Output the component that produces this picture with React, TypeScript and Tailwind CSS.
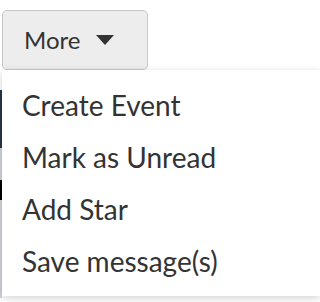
import React from "react";

export default function App() {
  const items = ["Create Event", "Mark as Unread", "Add Star", "Save message(s)"];
  return (
    <div className="relative w-[320px] h-[302px] bg-white overflow-hidden" style={{ fontFamily: "Lato, 'Open Sans', sans-serif" }}>
      <div className="absolute left-0 top-[90px] w-[2px] h-[58px] bg-[#26364a]" />
      <div className="absolute left-0 top-[148px] w-[2px] h-[150px] bg-[#cfd3da]" />
      <div className="absolute left-0 top-[180px] w-[2px] h-[20px] bg-black" />
      <div className="pt-[10px] pl-[2px]">
        <button className="flex items-center h-[60px] w-[146px] pl-[21px] border border-[#c8c8c8] rounded-[5px] bg-[#ededed] text-[#333] text-[24px] leading-none">
          <span>More</span>
          <svg width="18" height="10" viewBox="0 0 18 10" className="ml-[16px]">
            <polygon points="0,0 18,0 9,10" fill="#333" />
          </svg>
        </button>
      </div>
      <div className="relative ml-[2px] bg-white shadow-[0_2px_8px_rgba(0,0,0,0.18)] pt-[9px] h-[226px]">
        {items.map((t) => (
          <div key={t} className="pl-[20px] h-[52px] flex items-center text-[28px] text-[#333] leading-none">
            {t}
          </div>
        ))}
      </div>
    </div>
  );
}
